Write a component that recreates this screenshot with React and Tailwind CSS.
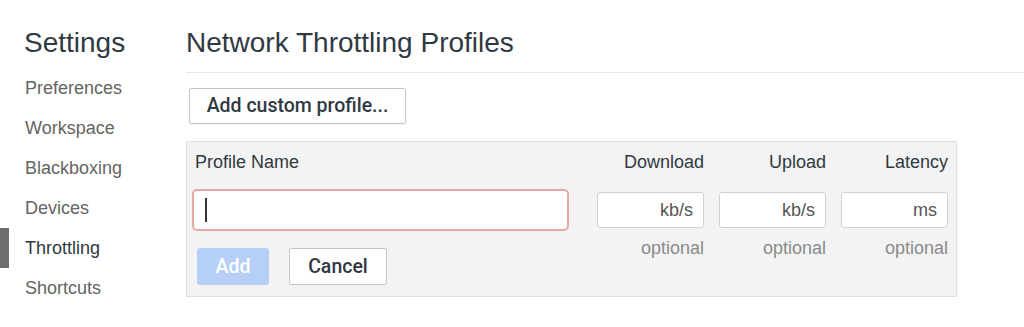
import React from 'react';

const navItems = ['Preferences', 'Workspace', 'Blackboxing', 'Devices', 'Throttling', 'Shortcuts'];

const Field = ({ label, unit }) => (
  <div className="flex w-[107px] flex-col items-end">
    <div className="h-[24px] leading-[24px] text-[#303942]">{label}</div>
    <div className="mt-[18px] flex h-[36px] w-full items-center justify-end rounded-[3px] border border-[#d0d0d0] bg-white pr-[10px] text-[18px] text-[#555]">
      {unit}
    </div>
    <div className="mt-[8px] h-[24px] leading-[24px] text-[#8a8a8a]">optional</div>
  </div>
);

export default function App() {
  return (
    <div className="flex h-[327px] w-[1024px] overflow-hidden bg-white font-['Liberation_Sans',Arial,sans-serif]">
      {/* sidebar */}
      <aside className="w-[186px] shrink-0 pt-[25px]">
        <h1 className="pl-[24px] text-[28px] leading-[36px] text-[#303942]">Settings</h1>
        <nav className="mt-[7px] flex flex-col">
          {navItems.map((item) => {
            const active = item === 'Throttling';
            return (
              <div key={item} className="flex h-[40px] items-center">
                <div className={active ? 'h-[40px] w-[9px] bg-[#6e6e6e]' : 'h-[40px] w-[9px]'} />
                <span className={`pl-[16px] text-[18px] ${active ? 'text-[#303942]' : 'text-[#646464]'}`}>{item}</span>
              </div>
            );
          })}
        </nav>
      </aside>

      {/* main */}
      <main className="flex-1 pt-[25px]">
        <h2 className="text-[28px] leading-[36px] text-[#303942]">Network Throttling Profiles</h2>
        <div className="mt-[11px] h-px bg-[#e6e6e6]" />
        <button className="mt-[15px] ml-[3px] h-[36px] w-[217px] rounded-[2px] border border-[#c6c6c6] bg-white font-['Roboto',sans-serif] text-[19.5px] font-medium text-[#303942] shadow-[0_1px_1px_rgba(0,0,0,0.05)]">
          Add custom profile...
        </button>

        <div className="mt-[17px] flex w-[771px] border border-[#e0e0e0] bg-[#f3f3f3] pt-[8px] pb-[11px] pl-[5px] pr-[8px] text-[18px]">
          <div className="flex w-[377px] flex-col">
            <div className="h-[24px] pl-[3px] leading-[24px] text-[#303942]">Profile Name</div>
            <div className="mt-[15px] flex h-[42px] items-center rounded-[5px] border-2 border-[#e4a9a5] bg-white pl-[11px]">
              <div className="h-[24px] w-[2px] bg-[#333]" />
            </div>
            <div className="mt-[17px] flex gap-[20px] pl-[5px]">
              <button className="h-[37px] w-[72px] rounded-[3px] bg-[#b5cff6] font-['Roboto',sans-serif] text-[19.5px] font-medium text-white">Add</button>
              <button className="h-[37px] w-[98px] rounded-[2px] border border-[#c6c6c6] bg-white font-['Roboto',sans-serif] text-[19.5px] font-medium text-[#303942]">
                Cancel
              </button>
            </div>
          </div>
          <div className="ml-[28px] flex gap-[15px]">
            <Field label="Download" unit="kb/s" />
            <Field label="Upload" unit="kb/s" />
            <Field label="Latency" unit="ms" />
          </div>
        </div>
      </main>
    </div>
  );
}
